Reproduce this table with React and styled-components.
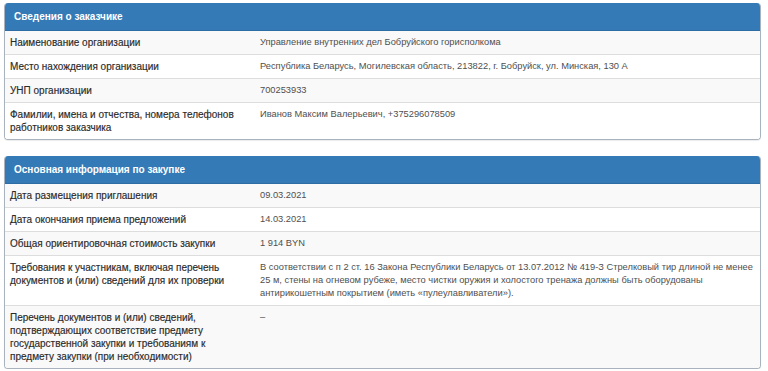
import React from 'react';
import styled, { createGlobalStyle } from 'styled-components';

const GlobalStyle = createGlobalStyle`
  html, body {
    margin: 0;
    padding: 0;
    background: #ffffff;
  }
  body {
    font-family: "Liberation Sans", Arial, sans-serif;
  }
`;

const Page = styled('div')`
  display: flex;
  flex-direction: column;
  gap: 16px;
  padding: 3px 7px 0 4px;
`;

const Panel = styled('section')`
  border: 1px solid #a9b3bd;
  border-top: 0;
  border-radius: 4px;
  overflow: hidden;
  box-shadow: 0 1px 1px rgba(0, 0, 0, 0.08);
`;

const PanelHeading = styled('h3')`
  margin: 0;
  height: 28px;
  display: flex;
  align-items: center;
  padding: 0 9px;
  background: #337ab7;
  border-bottom: 1px solid #2e6da4;
  color: #ffffff;
  font-size: 10px;
  font-weight: bold;
  box-sizing: border-box;
`;

const Row = styled('div')`
  display: grid;
  grid-template-columns: 250px 1fr;
  background: ${({ $striped }) => ($striped ? '#f9f9f9' : '#ffffff')};
  border-top: ${({ $first }) => ($first ? '0' : '1px solid #dddddd')};
`;

const Cell = styled('div')`
  padding: 5px 5px;
  font-size: ${({ $label }) => ($label ? '10px' : '9.3px')};
  line-height: 13px;
  color: ${({ $label }) => ($label ? '#2a2a2a' : '#4f4f4f')};
  -webkit-text-stroke: ${({ $label }) => ($label ? '0.15px #2a2a2a' : '0')};
`;

const customer = [
  ['Наименование организации', 'Управление внутренних дел Бобруйского горисполкома'],
  ['Место нахождения организации', 'Республика Беларусь, Могилевская область, 213822, г. Бобруйск, ул. Минская, 130 А'],
  ['УНП организации', '700253933'],
  ['Фамилии, имена и отчества, номера телефонов работников заказчика', 'Иванов Максим Валерьевич, +375296078509'],
];

const purchase = [
  ['Дата размещения приглашения', '09.03.2021'],
  ['Дата окончания приема предложений', '14.03.2021'],
  ['Общая ориентировочная стоимость закупки', '1 914 BYN'],
  [
    'Требования к участникам, включая перечень документов и (или) сведений для их проверки',
    'В соответствии с п 2 ст. 16 Закона Республики Беларусь от 13.07.2012 № 419-З Стрелковый тир длиной не менее 25 м, стены на огневом рубеже, место чистки оружия и холостого тренажа должны быть оборудованы антирикошетным покрытием (иметь «пулеулавливатели»).',
  ],
  [
    'Перечень документов и (или) сведений, подтверждающих соответствие предмету государственной закупки и требованиям к предмету закупки (при необходимости)',
    '–',
  ],
];

const InfoPanel = ({ title, rows }) => (
  <Panel>
    <PanelHeading>{title}</PanelHeading>
    {rows.map(([label, value], i) => (
      <Row key={label} $striped={i % 2 === 0} $first={i === 0}>
        <Cell $label>{label}</Cell>
        <Cell>{value}</Cell>
      </Row>
    ))}
  </Panel>
);

const App = () => (
  <>
    <GlobalStyle />
    <Page>
      <InfoPanel title="Сведения о заказчике" rows={customer} />
      <InfoPanel title="Основная информация по закупке" rows={purchase} />
    </Page>
  </>
);

export default App;
